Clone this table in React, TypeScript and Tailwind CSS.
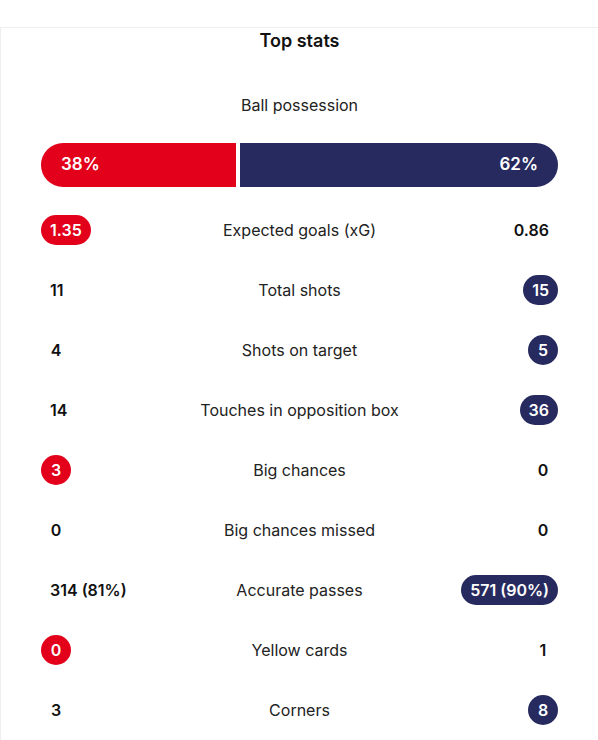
import React from "react";

type Side = "home" | "away" | null;

interface Stat {
  label: string;
  home: string;
  away: string;
  highlight: Side;
}

const stats: Stat[] = [
  { label: "Expected goals (xG)", home: "1.35", away: "0.86", highlight: "home" },
  { label: "Total shots", home: "11", away: "15", highlight: "away" },
  { label: "Shots on target", home: "4", away: "5", highlight: "away" },
  { label: "Touches in opposition box", home: "14", away: "36", highlight: "away" },
  { label: "Big chances", home: "3", away: "0", highlight: "home" },
  { label: "Big chances missed", home: "0", away: "0", highlight: null },
  { label: "Accurate passes", home: "314 (81%)", away: "571 (90%)", highlight: "away" },
  { label: "Yellow cards", home: "0", away: "1", highlight: "home" },
  { label: "Corners", home: "3", away: "8", highlight: "away" },
];

function Value({ value, active, color }: { value: string; active: boolean; color: string }) {
  return (
    <span
      className={
        "flex h-[30px] min-w-[30px] items-center justify-center rounded-full px-[9px] text-[16px] font-semibold " +
        (active ? color + " text-white" : "text-[#111]")
      }
    >
      {value}
    </span>
  );
}

export default function App() {
  const home = 38;
  const away = 62;

  return (
    <div className="w-[598px] bg-white pt-[27px] font-['Inter',sans-serif] text-[#111]">
      <div className="border-t border-l border-[#efefef] pt-[1px]">
        <h2 className="text-center text-[18px] leading-6 font-semibold">Top stats</h2>

        <div className="mt-10 text-center text-[16px] leading-6 text-[#222]">Ball possession</div>

        {/* Possession bar */}
        <div className="mx-[40px] mt-[26px] flex h-[44px] gap-1">
          <div className="flex items-center rounded-l-full bg-[#e2001a]" style={{ flex: `${home} 1 0%` }}>
            <span className="pl-[20px] text-[17px] font-semibold text-white">{home}%</span>
          </div>
          <div
            className="flex items-center justify-end rounded-r-full bg-[#272a5e]"
            style={{ flex: `${away} 1 0%` }}
          >
            <span className="pr-[20px] text-[17px] font-semibold text-white">{away}%</span>
          </div>
        </div>

        <div className="mt-[13px] px-[40px]">
          {stats.map((s) => (
            <div key={s.label} className="grid h-[60px] grid-cols-[1fr_auto_1fr] items-center">
              <div className="flex justify-start">
                <Value value={s.home} active={s.highlight === "home"} color="bg-[#e2001a]" />
              </div>
              <div className="text-center text-[16px] text-[#222]">{s.label}</div>
              <div className="flex justify-end">
                <Value value={s.away} active={s.highlight === "away"} color="bg-[#272a5e]" />
              </div>
            </div>
          ))}
        </div>
      </div>
    </div>
  );
}
